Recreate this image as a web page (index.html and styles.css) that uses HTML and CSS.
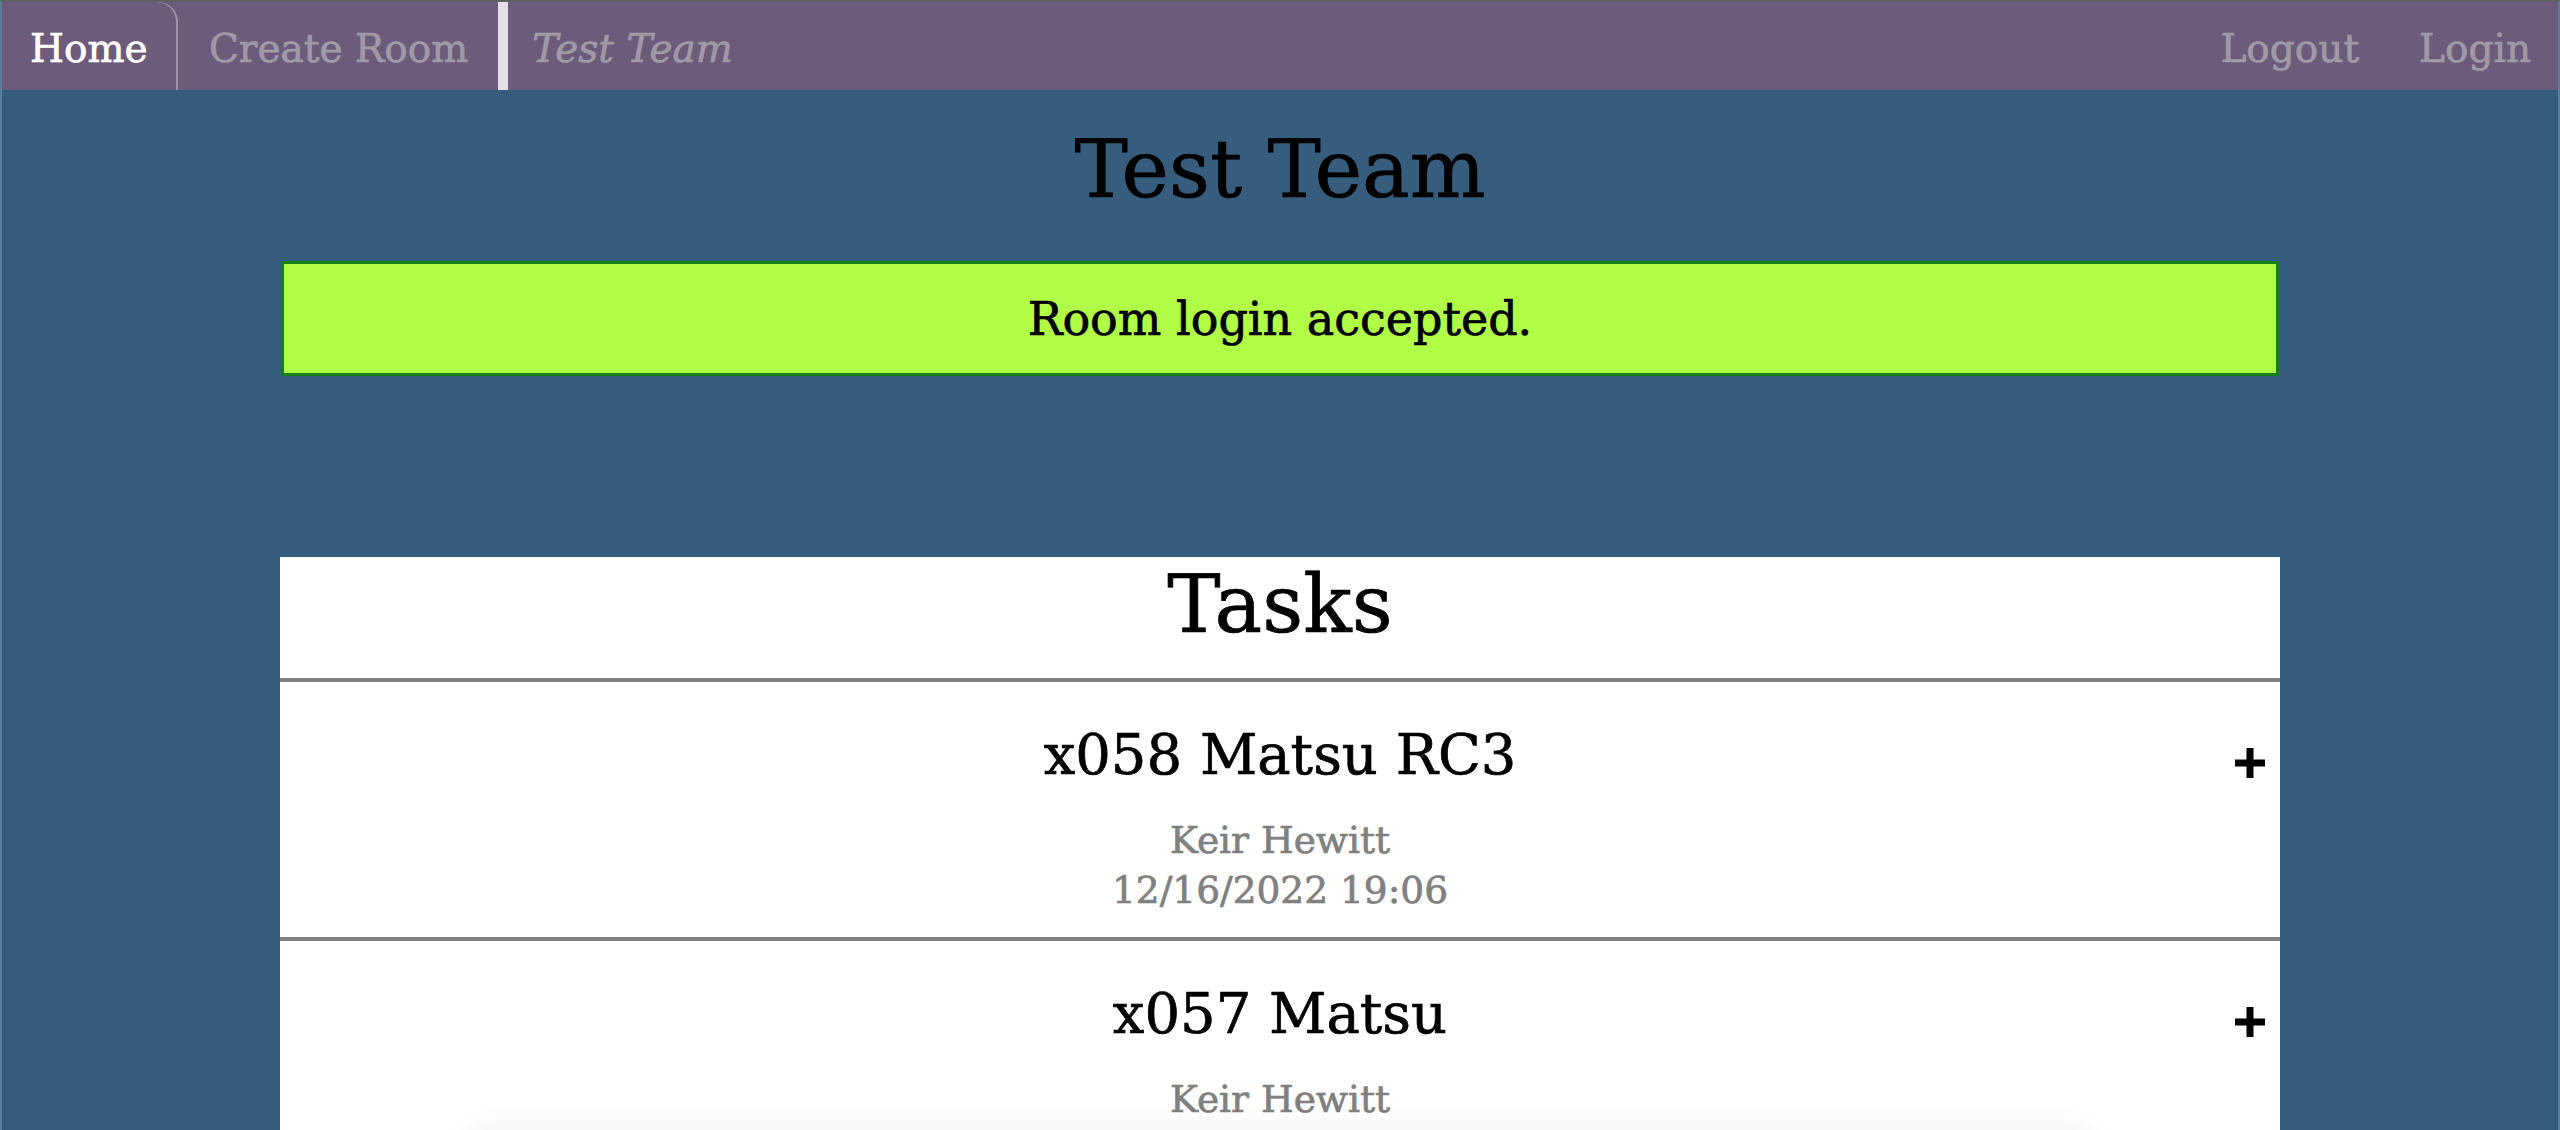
FILE: index.html
```html
<!DOCTYPE html>
<html lang="en">
<head>
<meta charset="utf-8">
<title>Test Team</title>
<link rel="stylesheet" href="styles.css">
</head>
<body>
<nav class="topnav">
  <div class="nav-left">
    <a class="tab tab-active" href="#">Home</a>
    <a class="tab" href="#">Create Room</a>
    <span class="nav-sep"></span>
    <a class="tab tab-room" href="#">Test Team</a>
  </div>
  <div class="nav-right">
    <a class="tab" href="#">Logout</a>
    <a class="tab" href="#">Login</a>
  </div>
</nav>
<main class="page">
  <h1 class="room-title">Test Team</h1>
  <div class="alert">Room login accepted.</div>
  <section class="card">
    <h2 class="card-title">Tasks</h2>
    <div class="task">
      <div class="task-name">x058 Matsu RC3</div>
      <div class="task-meta">Keir Hewitt</div>
      <div class="task-meta">12/16/2022 19:06</div>
      <svg class="plus" width="30" height="30" viewBox="0 0 30 30"><rect x="11.5" y="0" width="7" height="30" fill="#000"/><rect x="0" y="11.5" width="30" height="7" fill="#000"/></svg>
    </div>
    <div class="task">
      <div class="task-name">x057 Matsu</div>
      <div class="task-meta">Keir Hewitt</div>
      <div class="task-meta">12/16/2022 18:41</div>
      <svg class="plus" width="30" height="30" viewBox="0 0 30 30"><rect x="11.5" y="0" width="7" height="30" fill="#000"/><rect x="0" y="11.5" width="30" height="7" fill="#000"/></svg>
    </div>
  </section>
</main>
<div class="bottom-shade"></div>
</body>
</html>
```

FILE: styles.css
```css
html, body {
  margin: 0;
  padding: 0;
}
body {
  font-family: "DejaVu Serif", "Liberation Serif", serif;
  background: #365d7e;
  border-top: 2px solid #5f5f5f;
  border-left: 2px solid #5f7d98;
  border-right: 2px solid #5f7d98;
  min-height: 1128px;
  box-sizing: border-box;
  overflow: hidden;
  -webkit-text-stroke: 0.7px currentColor;
}
.topnav {
  display: flex;
  justify-content: space-between;
  align-items: stretch;
  height: 88px;
  background: #6c5b7a;
  margin: 0 -2px;
}
.nav-left, .nav-right {
  display: flex;
  align-items: stretch;
}
.tab {
  display: flex;
  align-items: center;
  font-size: 39px;
  color: #a09aa6;
  text-decoration: none;
  padding-top: 4px;
}
.tab-active {
  color: #ffffff;
  width: 178px;
  box-sizing: border-box;
  padding-left: 30px;
  border-top-right-radius: 20px;
  box-shadow: inset -2px 0 0 rgba(255,255,255,0.35), inset 2px 0 0 rgba(255,255,255,0.15);
  margin-right: 31px;
}
.nav-sep {
  width: 10px;
  background: #e4dee7;
  margin-left: 30px;
  margin-right: 24px;
}
.tab-room {
  font-style: italic;
}
.nav-right {
  gap: 60px;
  padding-right: 29px;
}
.page {
  display: flex;
  flex-direction: column;
  align-items: center;
}
.room-title {
  margin: 32px 0 0;
  font-size: 80px;
  line-height: 1.2;
  font-weight: normal;
  color: #000;
}
.alert {
  margin-top: 43px;
  width: 1998px;
  height: 115px;
  box-sizing: border-box;
  border: 3px solid #138013;
  border-radius: 3px;
  background: #b1fc47;
  display: flex;
  align-items: center;
  justify-content: center;
  font-size: 46px;
  color: #000;
}
.card {
  margin-top: 181px;
  width: 2000px;
  background: #fff;
}
.card-title {
  margin: 0;
  font-size: 80px;
  line-height: 1.2;
  font-weight: normal;
  text-align: center;
  padding-bottom: 25px;
  border-bottom: 4px solid #808080;
}
.task {
  position: relative;
  display: flex;
  flex-direction: column;
  align-items: center;
  padding: 39px 0 22px;
  border-bottom: 4px solid #808080;
}
.task-name {
  font-size: 56px;
  line-height: 1.2;
  color: #000;
  margin-bottom: 27px;
}
.task-meta {
  font-size: 37.5px;
  line-height: 50px;
  color: #808080;
}
.plus {
  position: absolute;
  top: 66px;
  right: 15px;
}
.bottom-shade {
  position: fixed;
  left: 470px;
  width: 1620px;
  bottom: -40px;
  height: 40px;
  box-shadow: 0 0 30px rgba(0,0,0,0.07);
}
```
